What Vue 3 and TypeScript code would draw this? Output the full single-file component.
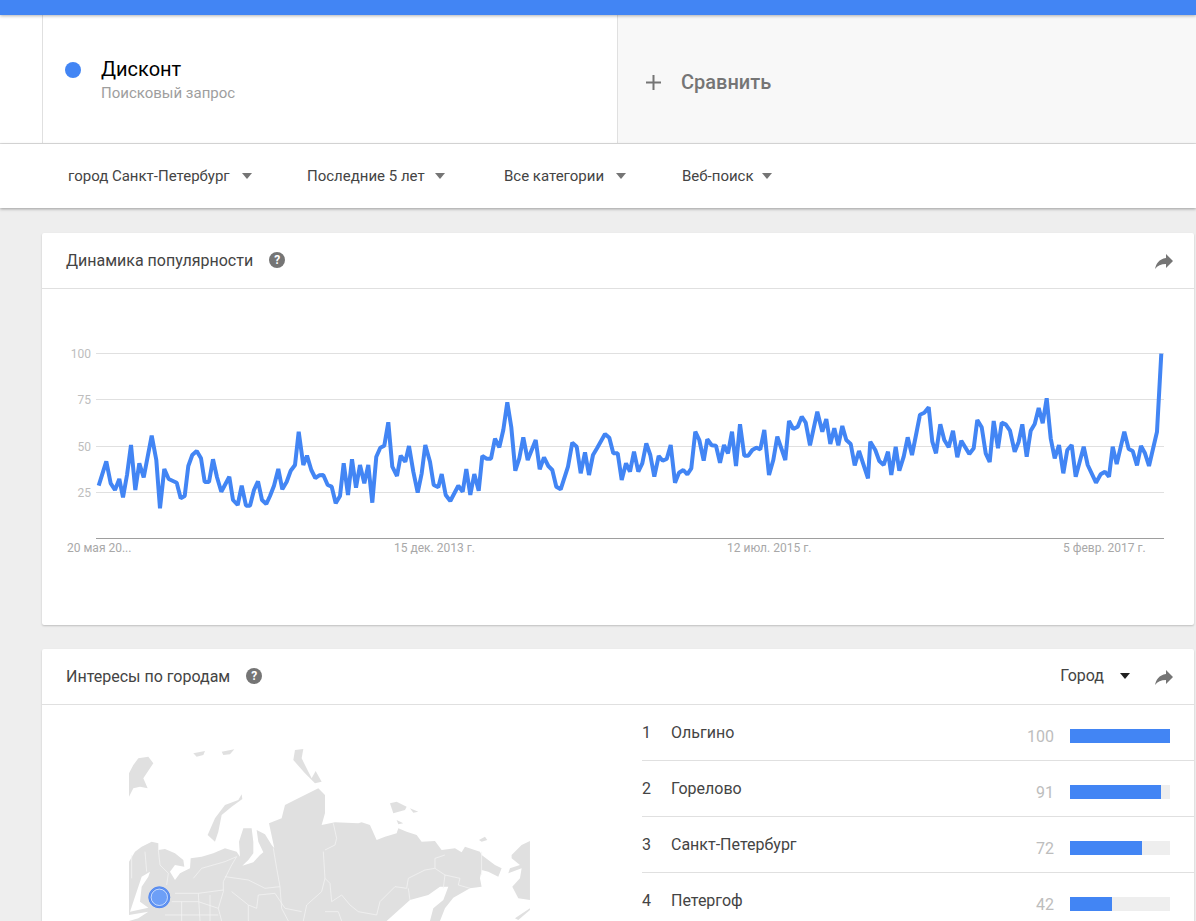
<script setup lang="ts">
import { computed } from 'vue'

interface Filter {
  label: string
}

interface CityRow {
  rank: number
  name: string
  value: number
}

const filters: Array<Filter> = [
  { label: 'город Санкт-Петербург' },
  { label: 'Последние 5 лет' },
  { label: 'Все категории' },
  { label: 'Веб-поиск' },
]

const cities: Array<CityRow> = [
  { rank: 1, name: 'Ольгино', value: 100 },
  { rank: 2, name: 'Горелово', value: 91 },
  { rank: 3, name: 'Санкт-Петербург', value: 72 },
  { rank: 4, name: 'Петергоф', value: 42 },
]

const gridLines = [
  { y: 353.5, label: '100' },
  { y: 399.5, label: '75' },
  { y: 446.5, label: '50' },
  { y: 492.5, label: '25' },
]

const dateLabels = [
  { x: 67, label: '20 мая 20...' },
  { x: 394, label: '15 дек. 2013 г.' },
  { x: 727, label: '12 июл. 2015 г.' },
  { x: 1063, label: '5 февр. 2017 г.' },
]

// traced vertices, in 3x units from three crops of the chart
const traceA = '176,437 199,364 212,430 225,450 238,417 249,472 261,405 273,315 286,450 298,370 311,412 335,287 349,360 360,505 373,387 386,417 410,428 422,475 434,468 445,378 457,345 470,333 483,355 494,426 507,426 519,358 531,412 544,455 568,410 579,480 593,495 605,437 618,497 630,497 642,450 654,424 666,480 679,492 690,468 702,437 715,387 727,448 740,425 752,392 765,375 776,275 790,375 801,347 814,390 826,414 838,406 850,405 863,435 875,440 887,490 900,468 911,370 924,465 936,358 948,443 960,375 973,430 985,375 997,488 1009,350 1021,323 1033,317 1045,247 1057,380 1071,408 1082,347 1096,365 1107,318 1120,395 1133,458 1145,400 1156,315 1170,365 1181,435 1195,442'
const traceB = '65,402 77,465 91,483 115,437 128,455 139,387 151,465 163,402 176,452 187,348 200,356 213,356 225,296 238,322 250,270 262,187 274,262 286,392 298,355 310,292 323,360 347,300 359,388 372,352 385,378 397,390 409,440 422,448 444,380 457,308 470,320 482,400 495,337 507,405 519,345 531,325 555,282 568,293 580,340 593,340 605,420 618,370 630,395 642,335 655,395 667,370 679,310 691,345 703,410 716,348 728,362 740,357 752,315 765,428 777,398 790,390 802,403 814,385 826,275 838,300 851,362 862,298 875,316 888,317 900,368 912,315 924,340 936,275 948,378 960,253 973,347 985,347 997,330 1009,323 1021,328 1033,270 1047,405 1060,360 1072,290 1096,360 1107,243 1120,267 1133,260 1145,230'
const traceC = '17,248 30,316 52,215 67,275 79,237 91,312 103,265 115,316 127,258 139,300 152,312 164,376 177,333 204,415 211,305 226,330 238,363 251,375 264,335 274,405 287,320 298,392 311,350 323,292 336,345 348,285 360,224 373,218 386,202 397,305 408,340 421,253 433,300 446,322 459,272 472,352 484,302 508,342 521,325 532,240 545,262 557,340 569,366 581,243 594,325 605,248 617,253 630,272 644,335 656,305 667,253 680,350 692,272 704,252 716,204 728,250 740,175 752,295 764,355 777,315 790,400 802,330 815,315 827,410 851,320 863,375 888,428 902,403 915,395 927,410 938,320 950,372 973,275 986,327 998,333 1011,376 1023,318 1035,340 1047,378 1071,275 1084,41'

function toScreen(trace: string, originX: number): string {
  return trace
    .split(' ')
    .map((pair) => {
      const [x, y] = pair.split(',').map(Number)
      return `${(originX + x / 3).toFixed(1)},${(340 + y / 3).toFixed(1)}`
    })
    .join(' ')
}

const linePoints = computed(() => {
  return [toScreen(traceA, 40), toScreen(traceB, 420), toScreen(traceC, 800)].join(' ')
})

// map shapes are in 3x units, origin at (125, 745) on the page
const land = '12,528 12,350 30,320 50,305 80,290 100,295 100,315 120,312 150,325 175,345 178,365 150,360 135,380 150,405 165,385 195,370 197,340 230,335 265,325 300,310 335,320 345,335 342,290 355,250 380,250 385,290 385,325 370,345 352,362 385,352 405,330 415,322 400,290 395,255 420,268 440,300 448,310 432,235 470,220 480,180 520,160 580,130 600,150 600,205 590,240 630,232 700,235 710,232 735,240 755,285 780,275 815,265 820,250 845,260 875,270 890,290 930,288 950,315 990,310 1010,322 1020,305 1065,320 1070,330 1110,360 1130,370 1120,395 1090,380 1070,375 1065,400 1070,425 1035,430 985,458 960,490 945,528 915,528 925,490 955,465 970,425 945,425 910,450 855,465 785,528'
const islands = [
  '12,85 12,155 25,130 45,125 68,130 55,100 85,55 70,35 40,40 25,60',
  '350,148 340,165 300,180 270,220 248,270 270,290 280,260 290,210 320,185 352,162',
  '510,15 535,12 530,40 560,100 572,78 590,110 570,115 540,85 505,45',
  '205,25 240,18 235,30 215,35',
  '290,20 328,13 315,28 295,30',
  '795,175 815,170 845,185 840,195 805,205',
  '855,190 880,200 865,203',
  '815,225 835,235 820,238',
  '1062,285 1080,275 1087,285 1070,290',
  '1160,330 1190,300 1215,288 1215,465 1180,460 1162,425 1185,400 1190,370 1150,385 1155,370 1185,360 1160,340',
  '1170,520 1215,490 1215,495 1180,525',
]
const water = [
  '25,470 50,395 75,380 70,395 50,425 45,470 70,488 15,500',
  '12,510 70,500 40,520 12,528',
]
const borders = [
  '595,320 600,400 590,440 545,480 535,528',
  '600,315 630,300 635,280 625,235',
  '600,400 615,415 620,470 650,450 675,480 700,500 755,510 765,470 810,425 845,430 850,400 900,375 930,370 930,340 960,330',
  '930,370 960,390 1005,400 1000,420 1035,430',
  '960,390 955,430',
  '850,430 855,465',
  '1070,320 1070,390',
  '335,335 320,360 295,410 295,440 280,490 290,528',
  '295,435 220,445 150,445',
  '205,400 230,370 300,350 335,335',
  '100,315 105,360 130,385 125,420',
  '300,395 370,405 420,430 465,425',
  '465,425 470,490 490,528',
  '445,310 455,370 465,425',
  '320,440 370,480 370,528',
  '400,450 450,445 480,490',
  '400,450 395,490 370,480',
  '60,320 65,380',
  '20,330 20,400',
  '140,470 220,470 280,490',
  '120,510 280,510',
  '170,470 170,528',
  '220,445 225,528',
  '255,450 255,528',
  '480,490 530,500',
  '600,500 640,500 650,528',
]
</script>

<template>
  <div class="page">
    <div class="top-bar" />

    <div class="search-row">
      <div class="search-gutter" />
      <div class="term">
        <span class="term-dot" />
        <div>
          <div class="term-name">Дисконт</div>
          <div class="term-type">Поисковый запрос</div>
        </div>
      </div>
      <div class="compare">
        <svg class="compare-plus" width="15" height="15" viewBox="0 0 15 15">
          <path d="M6.500 0h2v6.500H15v2H8.500V15h-2V8.500H0v-2h6.500z" />
        </svg>
        <span>Сравнить</span>
      </div>
    </div>

    <div class="filters">
      <div v-for="item in filters" :key="item.label" class="filter">
        <span>{{ item.label }}</span>
        <i class="caret" />
      </div>
    </div>

    <main class="content">
      <section class="card trend-card">
        <header class="card-header">
          <h2>Динамика популярности</h2>
          <span class="help">?</span>
          <svg class="share" width="24" height="24" viewBox="0 0 24 24">
            <path d="M14 9V5l7 7-7 7v-4.100c-5 0-8.500 1.600-11 5.100 1-5 4-10 11-11z" />
          </svg>
        </header>
        <svg class="chart" width="1152" height="336" viewBox="42 289 1152 336">
          <g v-for="line in gridLines" :key="line.label">
            <text class="tick" x="91" :y="line.y + 4" text-anchor="end">{{ line.label }}</text>
            <line class="grid" x1="96" x2="1164" :y1="line.y" :y2="line.y" />
          </g>
          <line class="axis" x1="96" x2="1164" y1="538.5" y2="538.5" />
          <text v-for="item in dateLabels" :key="item.label" class="tick date" :x="item.x" y="552">{{ item.label }}</text>
          <polyline class="trend" :points="linePoints" />
        </svg>
      </section>

      <section class="card">
        <header class="card-header">
          <h2>Интересы по городам</h2>
          <span class="help">?</span>
          <span class="region-select">Город</span>
          <i class="caret caret-dark" />
          <svg class="share share-after" width="24" height="24" viewBox="0 0 24 24">
            <path d="M14 9V5l7 7-7 7v-4.100c-5 0-8.500 1.600-11 5.100 1-5 4-10 11-11z" />
          </svg>
        </header>
        <div class="geo">
          <div class="map-box">
            <svg class="map" width="401" height="172" viewBox="129 749 401 172">
              <g transform="translate(125 745) scale(0.3333)">
                <polygon class="land" :points="land" />
                <polygon v-for="shape in islands" :key="shape" class="land" :points="shape" />
                <polygon v-for="shape in water" :key="shape" class="water" :points="shape" />
                <polyline v-for="shape in borders" :key="shape" class="border" :points="shape" />
              </g>
              <circle class="marker-fill" cx="159.300" cy="897.300" r="10.800" />
              <circle class="marker-ring" cx="159.300" cy="897.300" r="10.500" />
              <circle class="marker-ring" cx="159.300" cy="897.300" r="9.200" />
              <circle class="marker-gap" cx="159.300" cy="897.300" r="8.200" />
            </svg>
          </div>
          <div class="city-list">
            <div v-for="city in cities" :key="city.rank" class="city-row">
              <span class="city-rank">{{ city.rank }}</span>
              <span class="city-name">{{ city.name }}</span>
              <span class="city-value">{{ city.value }}</span>
              <span class="city-bar">
                <span class="city-bar-fill" :style="{ width: city.value + '%' }" />
              </span>
            </div>
          </div>
        </div>
      </section>
    </main>
  </div>
</template>

<style scoped>
.page {
  height: 921px;
  overflow: hidden;
  background: #eeeeee;
  font-family: Roboto, "Liberation Sans", sans-serif;
}

.top-bar {
  position: relative;
  height: 15px;
  background: #4285f4;
  box-shadow: 0 1px 3px rgba(0, 0, 0, 0.3);
}

.search-row {
  display: flex;
  height: 128px;
  background: #fff;
  border-bottom: 1px solid #e0e0e0;
}

.search-gutter {
  width: 42px;
}

.term {
  display: flex;
  width: 575px;
  box-sizing: border-box;
  padding: 42px 0 0 22px;
  gap: 20px;
  border-left: 1px solid #e0e0e0;
}

.term-dot {
  width: 16px;
  height: 16px;
  margin-top: 5px;
  border-radius: 50%;
  background: #4285f4;
}

.term-name {
  font-size: 20px;
  line-height: 24px;
  color: #000;
}

.term-type {
  margin-top: 3px;
  font-size: 15px;
  line-height: 18px;
  color: #9e9e9e;
}

.compare {
  display: flex;
  flex: 1;
  align-items: center;
  padding: 6px 0 0 28px;
  gap: 20px;
  background: #f8f8f8;
  border-left: 1px solid #e0e0e0;
  font-size: 20px;
  font-weight: 500;
  color: #757575;
}

.compare-plus {
  fill: #757575;
}

.filters {
  position: relative;
  display: grid;
  grid-template-columns: 239px 197px 178px auto;
  align-items: center;
  height: 64px;
  padding-left: 68px;
  background: #fff;
  box-shadow: 0 1px 3px rgba(0, 0, 0, 0.35);
  font-size: 15px;
  color: #444;
}

.filter {
  display: flex;
  align-items: center;
  gap: 12px;
}

.filter:nth-child(2) {
  gap: 10px;
}

.filter:last-child {
  gap: 8px;
}

.caret {
  width: 0;
  height: 0;
  border-top: 6px solid #757575;
  border-right: 5px solid transparent;
  border-left: 5px solid transparent;
}

.caret-dark {
  margin-left: 16px;
  border-top-color: #212121;
}

.content {
  padding: 25px 2px 0 42px;
}

.card {
  background: #fff;
  border-radius: 2px;
  box-shadow: 0 1px 2px rgba(0, 0, 0, 0.2);
}

.trend-card {
  height: 392px;
  margin-bottom: 24px;
}

.card-header {
  display: flex;
  align-items: center;
  box-sizing: border-box;
  height: 56px;
  padding: 0 18px 2px 24px;
  border-bottom: 1px solid #e0e0e0;
}

.card-header h2 {
  margin: 2px 0 0;
  font-size: 16px;
  font-weight: 400;
  color: #444;
}

.help {
  width: 16px;
  height: 16px;
  margin-left: 16px;
  border-radius: 50%;
  background: #757575;
  font-size: 12px;
  font-weight: 700;
  line-height: 16px;
  text-align: center;
  color: #fff;
}

.share {
  margin-top: 2px;
  margin-left: auto;
  fill: #757575;
}

.share-after {
  margin-left: 22px;
}

.region-select {
  margin-left: auto;
  font-size: 16px;
  color: #444;
}

.chart {
  display: block;
}

.tick {
  font-size: 12px;
  fill: #bdbdbd;
}

.date {
  fill: #a8a8a8;
}

.grid {
  stroke: #e0e0e0;
  stroke-width: 1;
}

.axis {
  stroke: #9e9e9e;
  stroke-width: 1;
}

.trend {
  fill: none;
  stroke: #4285f4;
  stroke-width: 4;
  stroke-linejoin: bevel;
}

.geo {
  display: flex;
}

.map-box {
  width: 600px;
  padding: 44px 0 0 87px;
  box-sizing: border-box;
}

.map {
  display: block;
}

.land {
  fill: #e0e0e0;
}

.water {
  fill: #fff;
}

.border {
  fill: none;
  stroke: #f4f4f4;
  stroke-width: 2.2;
}

.marker-ring {
  fill: none;
  stroke: #3f74e6;
  stroke-width: 0.55;
}

.marker-gap {
  fill: none;
  stroke: #eef3fe;
  stroke-width: 0.7;
}

.marker-fill {
  fill: #6d9ff7;
}

.city-list {
  flex: 1;
}

.city-row {
  display: flex;
  align-items: center;
  height: 55px;
  border-bottom: 1px solid #e0e0e0;
}

.city-rank {
  width: 29px;
  font-size: 16px;
  color: #444;
}

.city-name {
  width: 300px;
  font-size: 16px;
  color: #444;
}

.city-value {
  width: 83px;
  margin-top: 7px;
  font-size: 16px;
  text-align: right;
  color: #bdbdbd;
}

.city-bar {
  display: block;
  width: 100px;
  height: 14px;
  margin-top: 7px;
  margin-left: 16px;
  background: #eeeeee;
}

.city-bar-fill {
  display: block;
  height: 100%;
  background: #4285f4;
}
</style>

<style>
html,
body {
  margin: 0;
  overflow: hidden;
}
</style>
